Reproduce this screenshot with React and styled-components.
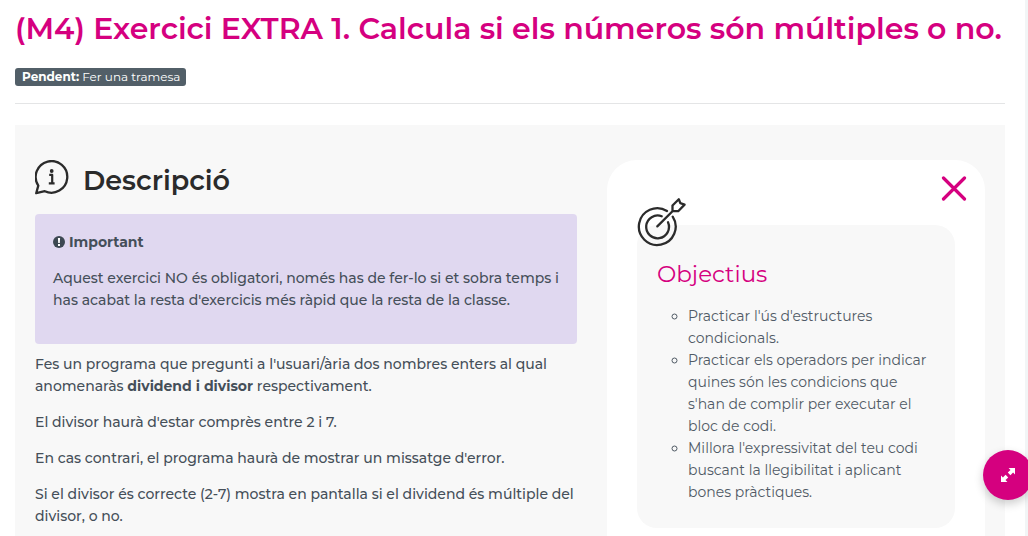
import React from "react";
import styled, { createGlobalStyle } from "styled-components";

const GlobalStyle = createGlobalStyle`
  *, *::before, *::after { box-sizing: border-box; }
  body {
    margin: 0;
    background: #fff;
    color: #454f59;
    font: 500 14px/22px Montserrat, Inter, sans-serif;
    overflow: hidden;
  }
  h1, h2, h3, p, ul { margin: 0; padding: 0; }
  strong { font-weight: 700; }
`;

const Page = styled.main`
  min-height: 100vh;
  padding: 9px 20px 0 15px;
  border-right: 3px solid #f2f5f6;
`;

const Title = styled.h1`
  color: #d5007f;
  font-size: 30px;
  font-weight: 600;
  line-height: 40px;
  white-space: nowrap;
`;

const Status = styled.div`
  display: flex;
  margin-top: 19px;
  padding-bottom: 17px;
  border-bottom: 1px solid #e4e5e6;
`;

const Badge = styled.span`
  padding: 0 6px 0 7px;
  border-radius: 3px;
  background: #525f68;
  color: #fff;
  font-size: 12px;
  font-weight: 400;
  line-height: 18px;
`;

const Panel = styled.section`
  display: grid;
  grid-template-columns: minmax(0, 1fr) 378px;
  gap: 30px;
  align-items: start;
  margin-top: 21px;
  padding: 35px 20px;
  background: #f8f8f8;
`;

const Description = styled.article`
  display: flex;
  flex-direction: column;
  gap: 14px;
`;

const SectionHeading = styled.header`
  display: flex;
  align-items: flex-start;
  gap: 13px;
  height: 40px;
`;

const SectionTitle = styled.h2`
  color: #2b2b2b;
  font-size: 27px;
  font-weight: 600;
  line-height: 42px;
`;

const Notice = styled.aside`
  display: flex;
  flex-direction: column;
  gap: 14px;
  min-height: 130px;
  margin-bottom: -5px;
  padding: 17px 16px 16px 18px;
  border-radius: 4px;
  background: #e0d8f0;
`;

const NoticeTitle = styled.h3`
  display: flex;
  align-items: center;
  gap: 4px;
  font-size: 14px;
  font-weight: 700;
  line-height: 22px;
`;

const Card = styled.aside`
  padding: 0 30px 40px;
  border-radius: 30px;
  background: #fff;
`;

const CardBar = styled.div`
  display: flex;
  justify-content: flex-end;
  height: 65px;
  margin-right: -12px;
  padding-top: 15px;
`;

const CloseButton = styled.button`
  width: 26px;
  height: 26px;
  padding: 0;
  border: 0;
  background: none;
  color: #d5007f;
  cursor: pointer;
`;

const Goals = styled.section`
  position: relative;
  padding: 34px 20px 25px;
  border-radius: 20px;
  background: #f8f8f8;
`;

const GoalsIcon = styled.svg`
  position: absolute;
  top: -28px;
  left: 0;
`;

const GoalsTitle = styled.h2`
  color: #d5007f;
  font-size: 23px;
  font-weight: 400;
  line-height: 30px;
`;

const GoalList = styled.ul`
  margin-top: 16px;
  padding-left: 31px;
  list-style: circle;
  color: #505a65;
  font-weight: 400;
`;

const ExpandButton = styled.button`
  position: fixed;
  right: -5px;
  bottom: 36px;
  display: grid;
  place-items: center;
  width: 50px;
  height: 50px;
  padding: 0;
  border: 0;
  border-radius: 50%;
  background: #d5007f;
  color: #fff;
  box-shadow: 0 4px 10px rgba(0, 0, 0, 0.2);
  cursor: pointer;
`;

const InfoIcon = () => (
  <svg width="35" height="35" viewBox="0 0 35 35" fill="none" stroke="#2b2b2b" strokeWidth="2.3" strokeLinejoin="round" aria-hidden="true">
    <path d="M3.3 25.6A15.8 15.8 0 1 1 9.8 31.2L1.2 33.2Z" />
    <path d="M14.2 14.8H17.2V23.4M13.8 23.4H19.6" strokeWidth="2.2" />
    <circle cx="16.7" cy="11" r="1.9" fill="#2b2b2b" stroke="none" />
  </svg>
);

const AlertIcon = () => (
  <svg width="12" height="12" viewBox="0 0 12 12" aria-hidden="true">
    <circle cx="6" cy="6" r="6" fill="#3d4852" />
    <path d="M4.9 2H7.1L6.8 7H5.2ZM5 8H7V10H5Z" fill="#fff" />
  </svg>
);

const TargetIcon = () => (
  <GoalsIcon width="50" height="50" viewBox="0 0 50 50" fill="none" stroke="#2b2b2b" strokeWidth="2.3" strokeLinecap="round" strokeLinejoin="round" aria-hidden="true">
    <path d="M30 14A18.4 18.4 0 1 0 35.7 19.6" />
    <path d="M24.7 19.3A11.4 11.4 0 1 0 31 25.3" />
    <path d="M20.3 29.4L35.5 14.2M35.5 14.2L35.5 8.5L41.8 2.2L43.3 6.2L47.6 7.6L41.2 14.2Z" />
  </GoalsIcon>
);

const CloseIcon = () => (
  <svg width="26" height="26" viewBox="0 0 26 26" fill="none" stroke="currentColor" strokeWidth="3.2" strokeLinecap="round" aria-hidden="true">
    <path d="M2.5 3L23.5 24M23.5 3L2.5 24" />
  </svg>
);

const ExpandIcon = () => (
  <svg width="16" height="16" viewBox="0 0 16 16" fill="currentColor" aria-hidden="true">
    <path d="M8.6 1H15V7.4L13.1 5.5L10.4 8.2L7.8 5.6L10.5 2.9ZM7.4 15H1V8.6L2.9 10.5L5.6 7.8L8.2 10.4L5.5 13.1Z" />
  </svg>
);

const goals = [
  "Practicar l'ús d'estructures condicionals.",
  "Practicar els operadors per indicar quines són les condicions que s'han de complir per executar el bloc de codi.",
  "Millora l'expressivitat del teu codi buscant la llegibilitat i aplicant bones pràctiques.",
];

export default function App() {
  return (
    <>
      <GlobalStyle />
      <Page>
        <Title>(M4) Exercici EXTRA 1. Calcula si els números són múltiples o no.</Title>
        <Status>
          <Badge><strong>Pendent:</strong> Fer una tramesa</Badge>
        </Status>
        <Panel>
          <Description>
            <SectionHeading>
              <InfoIcon />
              <SectionTitle>Descripció</SectionTitle>
            </SectionHeading>
            <Notice>
              <NoticeTitle><AlertIcon />Important</NoticeTitle>
              <p>Aquest exercici NO és obligatori, només has de fer-lo si et sobra temps i has acabat la resta d'exercicis més ràpid que la resta de la classe.</p>
            </Notice>
            <p>Fes un programa que pregunti a l'usuari/ària dos nombres enters al qual anomenaràs <strong>dividend i divisor</strong> respectivament.</p>
            <p>El divisor haurà d'estar comprès entre 2 i 7.</p>
            <p>En cas contrari, el programa haurà de mostrar un missatge d'error.</p>
            <p>Si el divisor és correcte (2-7) mostra en pantalla si el dividend és múltiple del divisor, o no.</p>
          </Description>
          <Card>
            <CardBar>
              <CloseButton type="button" aria-label="Tanca"><CloseIcon /></CloseButton>
            </CardBar>
            <Goals>
              <TargetIcon />
              <GoalsTitle>Objectius</GoalsTitle>
              <GoalList>
                {goals.map((goal) => <li key={goal}>{goal}</li>)}
              </GoalList>
            </Goals>
          </Card>
        </Panel>
      </Page>
      <ExpandButton type="button" aria-label="Amplia"><ExpandIcon /></ExpandButton>
    </>
  );
}
